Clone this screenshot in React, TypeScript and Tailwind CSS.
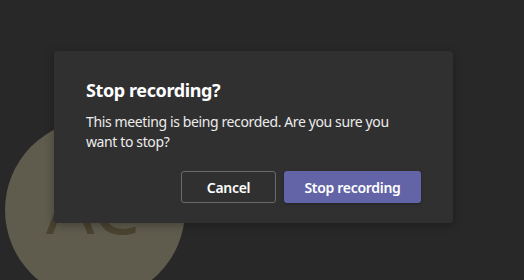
import React from "react";

export default function App() {
  return (
    <div
      className="relative w-[524px] h-[280px] overflow-hidden bg-[#282828]"
      style={{ fontFamily: '"Noto Sans", "Open Sans", sans-serif' }}
    >
      <div className="absolute left-[5px] top-[120px] w-[180px] h-[180px] rounded-full bg-[#5f5b4d]">
        <span className="absolute left-[41px] top-[47px] text-[76px] leading-none text-[#4a4331] tracking-[-1px]">AC</span>
      </div>
      <div className="absolute left-[54px] top-[51px] w-[399px] h-[172px] rounded-[4px] bg-[#303030] shadow-[0_2px_10px_rgba(0,0,0,0.3)] px-[32px] pt-[27px] pb-[20px] flex flex-col">
        <h1 className="text-[18px] leading-[24px] font-bold text-white tracking-[-0.4px]">Stop recording?</h1>
        <p className="mt-[10px] text-[14px] leading-[20px] text-[#ececec] tracking-[-0.38px]">
          This meeting is being recorded. Are you sure you want to stop?
        </p>
        <div className="mt-auto flex justify-end gap-[8px]">
          <button className="w-[95px] h-[32px] rounded-[3px] border border-[#6a6a6a] bg-transparent text-[14px] font-semibold text-white tracking-[-0.3px]">
            Cancel
          </button>
          <button className="w-[137px] h-[32px] rounded-[3px] bg-[#6264a7] text-[14px] font-semibold text-white tracking-[-0.3px] shadow-[0_1px_3px_rgba(0,0,0,0.3)]">
            Stop recording
          </button>
        </div>
      </div>
    </div>
  );
}
